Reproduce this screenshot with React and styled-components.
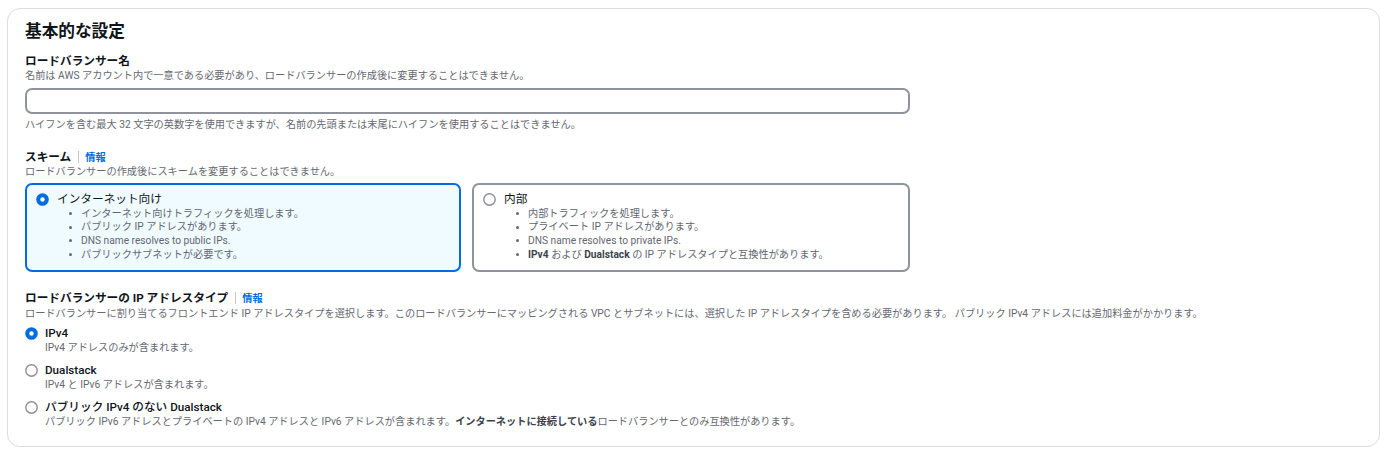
import React from "react";
import styled, { createGlobalStyle } from "styled-components";

const GlobalStyle = createGlobalStyle`
  html, body { margin: 0; padding: 0; background: #ffffff; }
  body {
    font-family: "Roboto", "Noto Sans CJK JP", sans-serif;
    color: #0f141a;
    -webkit-font-smoothing: antialiased;
  }
  * { box-sizing: border-box; }
`;

const Page = styled.div`
  padding: 8px 20px 6px 7px;
`;

const Card = styled.section`
  border: 1px solid #dcdce1;
  border-radius: 13px;
  padding: 13px 17px 18px 17px;
  background: #ffffff;
`;

const Heading = styled.h2`
  margin: 0;
  font-size: 16.67px;
  line-height: 20px;
  font-weight: 700;
  color: #0f141a;
`;

const Field = styled.div`
  margin-top: ${(p) => p.$mt || 0}px;
  display: flex;
  flex-direction: column;
`;

const Label = styled.div`
  display: flex;
  align-items: center;
  font-size: 11.67px;
  line-height: 15px;
  font-weight: 700;
  color: #0f141a;
`;

const Separator = styled.span`
  display: inline-block;
  width: 1px;
  height: 12px;
  background: #c6c6cd;
  margin: 0 6px 0 7px;
`;

const InfoLink = styled.a`
  font-size: 10.2px;
  line-height: 15px;
  font-weight: 700;
  color: #006ce0;
  text-decoration: none;
`;

const Description = styled.div`
  font-size: 10.2px;
  line-height: 13px;
  color: #656871;
  margin-top: ${(p) => p.$mt || 0}px;
  b { font-weight: 700; color: #3d434c; }
`;

const TextInput = styled.input`
  display: block;
  width: 885px;
  height: 26px;
  margin-top: ${(p) => p.$mt || 0}px;
  border: 2px solid #8f939b;
  border-radius: 7px;
  background: #ffffff;
  padding: 0 8px;
  font-size: 11.67px;
  outline: none;
`;

const TileGrid = styled.div`
  margin-top: 5.5px;
  width: 885px;
  display: grid;
  grid-template-columns: 436px 438px;
  column-gap: 11px;
`;

const Tile = styled.div`
  border: 2px solid ${(p) => (p.$selected ? "#006ce0" : "#8f939b")};
  background: ${(p) => (p.$selected ? "#f0fbff" : "#ffffff")};
  border-radius: 7px;
  padding: 6.5px 10px 8.5px 9px;
  height: 89px;
`;

const OptionHead = styled.div`
  display: flex;
  align-items: center;
  gap: 8px;
  font-size: 11.67px;
  line-height: 15px;
  font-weight: 400;
  color: #0f141a;
`;

const BulletList = styled.ul`
  list-style: none;
  margin: 0;
  padding: 0 0 0 33px;
`;

const BulletItem = styled.li`
  display: flex;
  align-items: center;
  font-size: 10.2px;
  line-height: 13.67px;
  color: #5f6670;
  b { font-weight: 700; color: #3d434c; }
`;

const Dot = styled.span`
  flex: none;
  width: 3px;
  height: 3px;
  border-radius: 50%;
  background: #656871;
  margin-right: 9px;
`;

const RadioGroup = styled.div`
  display: flex;
  flex-direction: column;
`;

const RadioOption = styled.div`
  margin-top: ${(p) => p.$mt || 0}px;
  display: grid;
  grid-template-columns: 13px 1fr;
  column-gap: 7px;
  align-items: center;
`;

const OptionLabel = styled.div`
  font-size: 11.67px;
  line-height: 15px;
  font-weight: 500;
  color: #0f141a;
`;

const OptionDesc = styled.div`
  grid-column: 2;
  font-size: 10.2px;
  line-height: 13px;
  color: #656871;
  b { font-weight: 700; color: #3d434c; }
`;

const RadioSvg = styled.svg`
  flex: none;
  display: block;
`;

function Radio({ checked }) {
  return (
    <RadioSvg width="13" height="13" viewBox="0 0 13 13">
      {checked ? (
        <>
          <circle cx="6.5" cy="6.5" r="6.3" fill="#006ce0" />
          <circle cx="6.5" cy="6.5" r="2.2" fill="#ffffff" />
        </>
      ) : (
        <circle cx="6.5" cy="6.5" r="5.7" fill="#ffffff" stroke="#8c8c94" strokeWidth="1.4" />
      )}
    </RadioSvg>
  );
}

function SchemeTile({ selected, title, items }) {
  return (
    <Tile $selected={selected}>
      <OptionHead>
        <Radio checked={selected} />
        <span>{title}</span>
      </OptionHead>
      <BulletList>
        {items.map((it, i) => (
          <BulletItem key={i}>
            <Dot />
            <span>{it}</span>
          </BulletItem>
        ))}
      </BulletList>
    </Tile>
  );
}

export default function App() {
  return (
    <>
      <GlobalStyle />
      <Page>
        <Card>
          <Heading>基本的な設定</Heading>

          <Field $mt={11.5}>
            <Label>ロードバランサー名</Label>
            <Description>
              名前は AWS アカウント内で一意である必要があり、ロードバランサーの作成後に変更することはできません。
            </Description>
            <TextInput $mt={6.5} type="text" />
            <Description $mt={3.5}>
              ハイフンを含む最大 32 文字の英数字を使用できますが、名前の先頭または末尾にハイフンを使用することはできません。
            </Description>
          </Field>

          <Field $mt={19}>
            <Label>
              スキーム
              <Separator />
              <InfoLink href="#">情報</InfoLink>
            </Label>
            <Description>ロードバランサーの作成後にスキームを変更することはできません。</Description>
            <TileGrid>
              <SchemeTile
                selected
                title="インターネット向け"
                items={[
                  "インターネット向けトラフィックを処理します。",
                  "パブリック IP アドレスがあります。",
                  "DNS name resolves to public IPs.",
                  "パブリックサブネットが必要です。",
                ]}
              />
              <SchemeTile
                title="内部"
                items={[
                  "内部トラフィックを処理します。",
                  "プライベート IP アドレスがあります。",
                  "DNS name resolves to private IPs.",
                  <>
                    <b>IPv4</b> および <b>Dualstack</b> の IP アドレスタイプと互換性があります。
                  </>,
                ]}
              />
            </TileGrid>
          </Field>

          <Field $mt={18.5}>
            <Label>
              ロードバランサーの IP アドレスタイプ
              <Separator />
              <InfoLink href="#">情報</InfoLink>
            </Label>
            <Description $mt={1}>
              ロードバランサーに割り当てるフロントエンド IP アドレスタイプを選択します。このロードバランサーにマッピングされる VPC とサブネットには、選択した IP アドレスタイプを含める必要があります。 パブリック IPv4 アドレスには追加料金がかかります。
            </Description>
            <RadioGroup>
              <RadioOption $mt={6}>
                <Radio checked />
                <OptionLabel>IPv4</OptionLabel>
                <OptionDesc>IPv4 アドレスのみが含まれます。</OptionDesc>
              </RadioOption>
              <RadioOption $mt={9}>
                <Radio />
                <OptionLabel>Dualstack</OptionLabel>
                <OptionDesc>IPv4 と IPv6 アドレスが含まれます。</OptionDesc>
              </RadioOption>
              <RadioOption $mt={9}>
                <Radio />
                <OptionLabel>パブリック IPv4 のない Dualstack</OptionLabel>
                <OptionDesc>
                  パブリック IPv6 アドレスとプライベートの IPv4 アドレスと IPv6 アドレスが含まれます。
                  <b>インターネットに接続している</b>ロードバランサーとのみ互換性があります。
                </OptionDesc>
              </RadioOption>
            </RadioGroup>
          </Field>
        </Card>
      </Page>
    </>
  );
}
